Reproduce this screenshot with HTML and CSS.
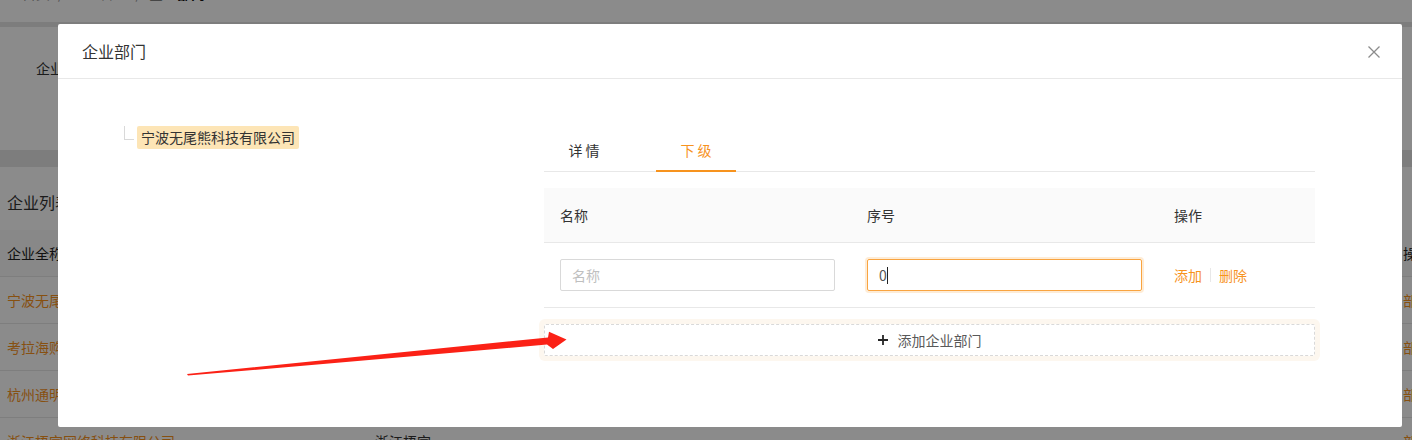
FILE: index.html
```html
<!DOCTYPE html>
<html lang="zh-CN">
<head>
  <meta charset="UTF-8" />
  <title>企业部门</title>
  <link rel="stylesheet" href="styles.css">
</head>
<body>
  <div class="page">
    <div class="crumb">
      <div class="crumb-text">
        <span class="crumb-icon"></span>
        <span>首页</span><span>/</span><span>企业管理</span><span>/</span><b>企业部门</b>
      </div>
    </div>
    <div class="filter">
      <label>企业名称：</label>
    </div>
    <div class="list">
      <div class="list-title">企业列表</div>
      <div class="grid-row grid-head"><div>企业全称</div><div>所属地区</div><div>操作</div></div>
      <div class="grid-row"><div class="link">宁波无尾熊科技有限公司</div><div>浙江宁波</div><div class="link">部门</div></div>
      <div class="grid-row"><div class="link">考拉海购科技有限公司</div><div>浙江杭州</div><div class="link">部门</div></div>
      <div class="grid-row"><div class="link">杭州通明科技有限公司</div><div>浙江杭州</div><div class="link">部门</div></div>
      <div class="grid-row"><div class="link">浙江梧宫网络科技有限公司</div><div>浙江梧宫</div><div class="link">部门</div></div>
    </div>
  </div>

  <div class="mask"></div>

  <div class="modal">
    <div class="modal-header">
      <span class="modal-title">企业部门</span>
      <svg class="close" width="12" height="12" viewBox="0 0 12 12">
        <path d="M0.5 0.5L11.5 11.5M11.5 0.5L0.5 11.5" stroke="#8c8c8c" stroke-width="1.3" fill="none"/>
      </svg>
    </div>
    <div class="modal-body">
      <div class="tree">
        <div class="tree-node">
          <span class="tree-line"></span>
          <span class="tree-title">宁波无尾熊科技有限公司</span>
        </div>
      </div>
      <div class="panel">
        <div class="tabs">
          <div class="tab">详 情</div>
          <div class="tab active">下 级</div>
        </div>
        <div class="table">
          <div class="tr th"><div>名称</div><div>序号</div><div>操作</div></div>
          <div class="tr">
            <div><input class="input" type="text" placeholder="名称" /></div>
            <div><div class="input focused">0<span class="caret"></span></div></div>
            <div class="ops"><a>添加</a><i class="divider"></i><a>删除</a></div>
          </div>
        </div>
        <button class="add-btn" type="button">
          <svg width="10" height="10" viewBox="0 0 10 10">
            <path d="M5 0V10M0 5H10" stroke="#262626" stroke-width="1.8" fill="none"/>
          </svg>
          添加企业部门
        </button>
      </div>
    </div>
  </div>

  <!-- annotation arrow -->
  <svg class="arrow" width="1412" height="440" viewBox="0 0 1412 440">
    <polygon points="187,374 548,337.4 549,331.8 566.5,339.4 553,349 547,344.6 188,375.6" fill="#fb2116"/>
  </svg>
</body>
</html>
```

FILE: styles.css
```css
* {
  box-sizing: border-box;
}
html, body {
  margin: 0;
  padding: 0;
  overflow: hidden;
}
body {
  font-family: "Noto Sans CJK SC", "Microsoft YaHei", sans-serif;
  font-size: 14px;
  color: #333;
  background-color: #e6e6e6;
  width: 1412px;
  height: 440px;
}

/* page behind the dialog */
.page {
  width: 1460px;
}
.crumb {
  height: 22px;
  background-color: #fff;
  padding-left: 2px;
  color: #999;
  overflow: hidden;
}
.crumb-text {
  display: flex;
  align-items: flex-end;
  gap: 8px;
  line-height: 14px;
  margin-top: -14px;
}
.crumb-icon {
  width: 13px;
  height: 12px;
  margin-right: -1px;
  background-color: #aaa;
}
.crumb-text b {
  color: #111;
}
.filter {
  height: 123px;
  margin-top: 5px;
  background-color: #fff;
  padding: 31px 36px 0;
}
.filter label {
  line-height: 20px;
}
.list {
  margin-top: 17px;
  background-color: #fff;
}
.list-title {
  height: 63px;
  line-height: 70px;
  padding-left: 7px;
  font-size: 16px;
}
.grid-row {
  display: grid;
  grid-template-columns: 368px 1fr 64px;
  height: 47px;
  align-items: center;
  border-bottom: 1px solid #e8e8e8;
}
.grid-row > div {
  padding-left: 7px;
  white-space: nowrap;
  overflow: hidden;
}
.grid-head {
  background-color: #fafafa;
  color: #222;
}
.grid-row .link {
  color: #f7931e;
}

.mask {
  position: fixed;
  inset: 0;
  background-color: rgba(0, 0, 0, 0.455);
}

/* dialog */
.modal {
  position: fixed;
  top: 24px;
  left: 58px;
  width: 1344px;
  height: 403px;
  background-color: #fff;
  border-radius: 2px;
}
.modal-header {
  height: 55px;
  padding: 0 22px 0 24px;
  border-bottom: 1px solid #e8e8e8;
  display: flex;
  align-items: center;
  justify-content: space-between;
}
.modal-title {
  font-size: 16px;
  color: #333;
  line-height: 22px;
}
.close {
  margin-top: 2px;
}
.modal-body {
  display: flex;
}
.tree {
  width: 486px;
  padding: 47px 0 0 66px;
}
.tree-node {
  display: flex;
  align-items: flex-start;
}
.tree-line {
  width: 10px;
  height: 14px;
  border-left: 1px solid #d9d9d9;
  border-bottom: 1px solid #d9d9d9;
}
.tree-title {
  margin-left: 3px;
  padding: 0 4px;
  height: 23px;
  line-height: 23px;
  background-color: #fde5b6;
  border-radius: 2px;
  color: #333;
}
.panel {
  width: 771px;
  margin-top: 52px;
}
.tabs {
  display: flex;
  border-bottom: 1px solid #e8e8e8;
}
.tab {
  position: relative;
  width: 80px;
  margin-right: 32px;
  height: 40px;
  line-height: 38px;
  text-align: center;
  color: #333;
}
.tab.active {
  color: #f7931e;
}
.tab.active::after {
  content: "";
  position: absolute;
  left: 0;
  right: 0;
  bottom: -1px;
  height: 2px;
  background-color: #f7931e;
}
.table {
  margin-top: 16px;
}
.tr {
  display: grid;
  grid-template-columns: 307px 307px 1fr;
  align-items: center;
  border-bottom: 1px solid #e8e8e8;
}
.tr > div {
  padding: 16px;
}
.th {
  height: 55px;
  background-color: #fafafa;
  color: #333;
}
.th > div {
  padding: 0 16px;
}
.input {
  display: block;
  width: 100%;
  height: 32px;
  border: 1px solid #d9d9d9;
  border-radius: 2px;
  padding: 0 11px;
  font-family: inherit;
  font-size: 14px;
  line-height: 30px;
  color: #555;
  outline: none;
}
.input::placeholder {
  color: #bfbfbf;
}
.input.focused {
  border-color: #f9a440;
  box-shadow: 0 0 0 2px rgba(247, 147, 30, 0.18);
  display: flex;
  align-items: center;
}
.caret {
  display: inline-block;
  width: 1px;
  height: 17px;
  background-color: #222;
}
.ops {
  display: flex;
  align-items: center;
  color: #f7931e;
}
.divider {
  width: 1px;
  height: 14px;
  margin: 0 8px;
  background-color: #e8e8e8;
}
.add-btn {
  margin-top: 16px;
  width: 100%;
  height: 32px;
  border: 1px dashed #d9d9d9;
  border-radius: 2px;
  background-color: #fff;
  box-shadow: 0 0 0 5px #fdf7ef;
  font-family: inherit;
  font-size: 14px;
  color: #595959;
  display: flex;
  align-items: center;
  justify-content: center;
  gap: 10px;
}

.arrow {
  position: fixed;
  top: 0;
  left: 0;
  pointer-events: none;
}
```
